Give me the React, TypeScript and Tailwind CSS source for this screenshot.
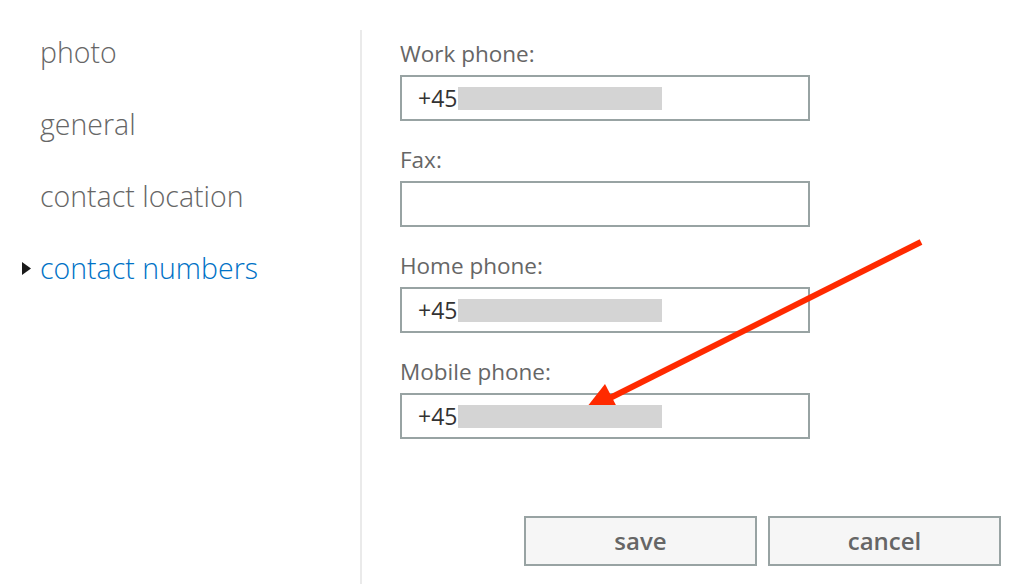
const fields = [
  { label: 'Work phone:', value: '+45' },
  { label: 'Fax:', value: '' },
  { label: 'Home phone:', value: '+45' },
  { label: 'Mobile phone:', value: '+45' },
]

const sections = ['photo', 'general', 'contact location', 'contact numbers']

function PhoneInput({ value }: { value: string }) {
  return (
    <div className="flex h-[46px] w-[410px] items-center border-2 border-[#98a3a3] bg-white pl-[16px]">
      {value && (
        <>
          <span className="text-[23px] leading-none text-[#333]">{value}</span>
          <span className="relative z-20 ml-[1px] inline-block h-[23px] w-[204px] bg-[#d4d4d4]" />
        </>
      )}
    </div>
  )
}

export default function App() {
  const active = 'contact numbers'

  return (
    <div
      className="relative h-[584px] w-[1020px] overflow-hidden bg-white pt-[30px]"
      style={{ fontFamily: '"Open Sans", "Noto Sans", sans-serif' }}
    >
      <div className="flex h-full">
        <nav className="w-[362px] shrink-0 border-r-2 border-[#eaeaea] pt-[4px]">
          <ul className="space-y-[36px]">
            {sections.map((s) => (
              <li key={s} className="flex items-center">
                <span className="flex w-[40px] justify-end pr-[9px]">
                  {s === active && (
                    <svg width="9" height="13" viewBox="0 0 9 13" className="blur-[0.5px]">
                      <polygon points="0,0 9,6.5 0,13" fill="#1a1a1a" />
                    </svg>
                  )}
                </span>
                <span
                  className={
                    s === active
                      ? 'text-[28.5px] font-light leading-[36px] text-[#0072c6]'
                      : 'text-[28.5px] font-light leading-[36px] text-[#666]'
                  }
                >
                  {s}
                </span>
              </li>
            ))}
          </ul>
        </nav>

        <div className="flex flex-1 flex-col pl-[38px] pr-[19px] pt-[12px]">
          <div className="space-y-[27px]">
            {fields.map((f) => (
              <div key={f.label}>
                <div className="mb-[9px] text-[22.5px] leading-[24px] text-[#666]">{f.label}</div>
                <PhoneInput value={f.value} />
              </div>
            ))}
          </div>

          <div className="mt-[77px] flex justify-end gap-[11px]">
            <button className="h-[50px] w-[233px] border-2 border-[#98a3a3] bg-[#f6f6f6] text-[24px] font-semibold text-[#666]">
              save
            </button>
            <button className="h-[50px] w-[233px] border-2 border-[#98a3a3] bg-[#f6f6f6] text-[24px] font-semibold text-[#666]">
              cancel
            </button>
          </div>
        </div>
      </div>

      <svg
        className="pointer-events-none absolute left-0 top-0 z-10"
        width="1020"
        height="584"
        viewBox="0 0 1020 584"
      >
        <line x1="921" y1="242" x2="606" y2="400" stroke="#ff2a00" strokeWidth="6" />
        <polygon points="605,384 619,411 583,412" fill="#ff2a00" />
      </svg>
    </div>
  )
}
